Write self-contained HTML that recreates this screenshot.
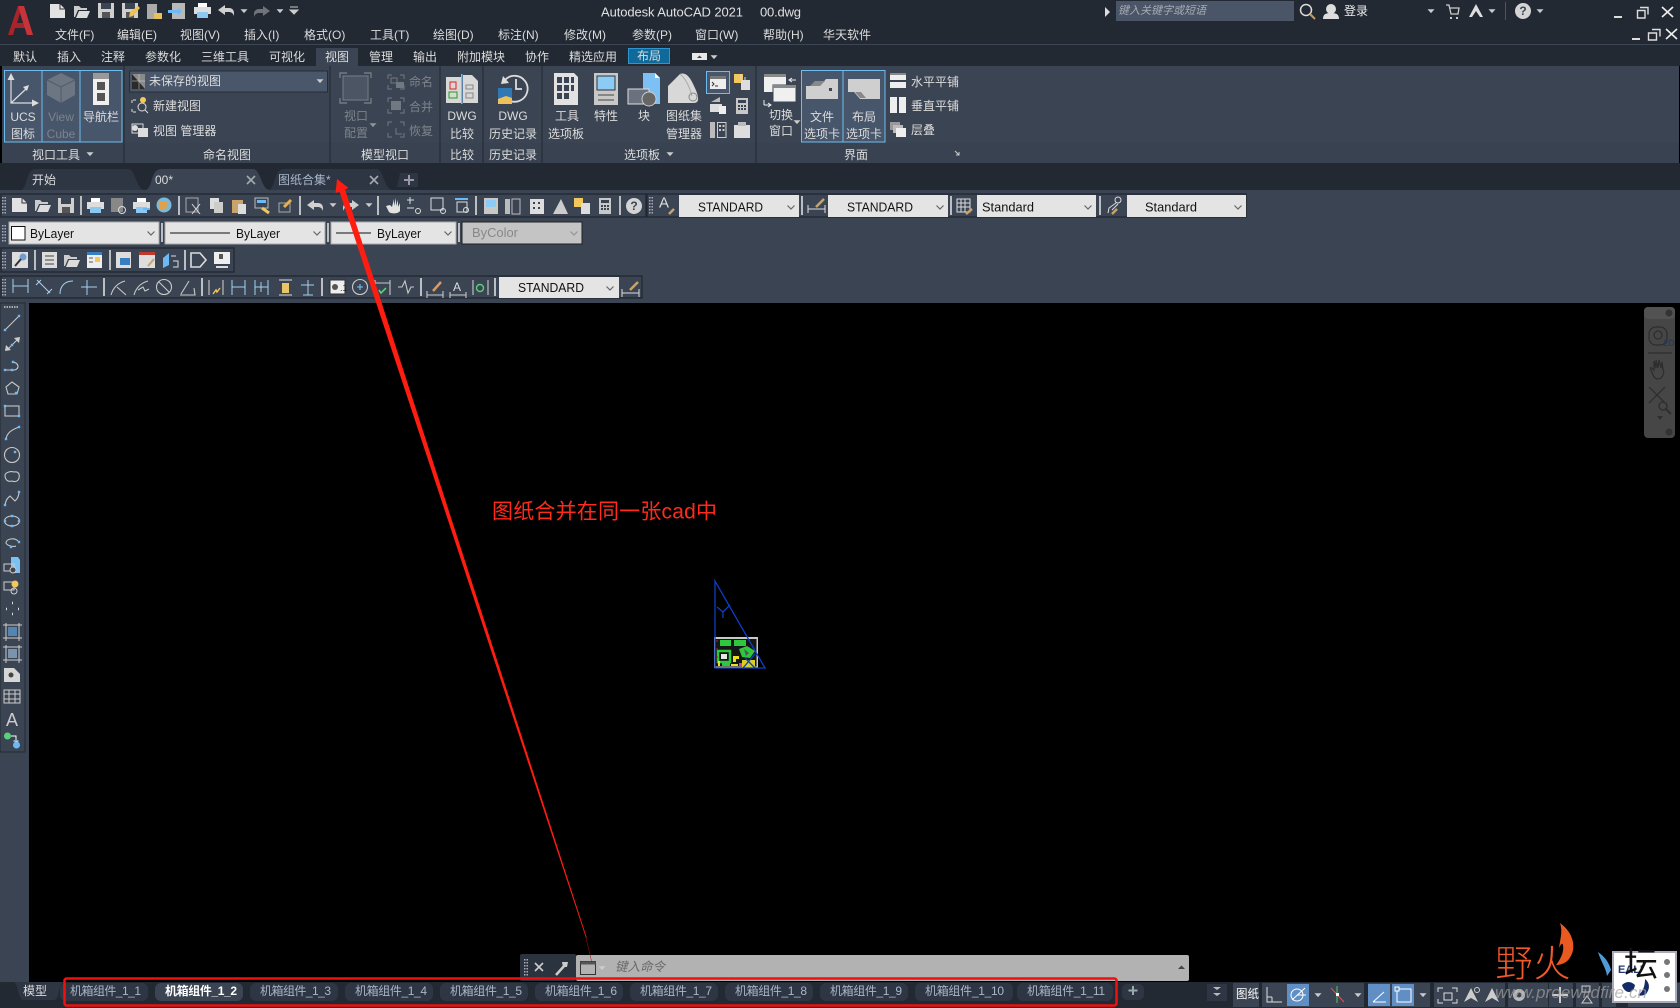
<!DOCTYPE html>
<html><head><meta charset="utf-8"><title>AutoCAD</title>
<style>
html,body{margin:0;padding:0;background:#000;overflow:hidden}
svg{display:block;font-family:"Liberation Sans","Noto Sans CJK SC",sans-serif}
.t{fill:#dcdcdc;font-size:12px;dominant-baseline:central}
.d{fill:#7d838c;font-size:12px;dominant-baseline:central}
.b{fill:#111;font-size:12.5px;dominant-baseline:central}
.m{text-anchor:middle}
.l{stroke:#c8c8c8;fill:none;stroke-width:1.1}
.u{stroke:#a6d2f0;fill:none;stroke-width:1}
.s{stroke:#e8e8e8;stroke-width:1.5}
.p{fill:none;stroke:#20262f;stroke-width:1.2}
.st{fill:#a8b6c9;font-size:12px;dominant-baseline:central}
.ft{fill:#2e3644}
</style></head><body>
<svg width="1680" height="1008" viewBox="0 0 1680 1008" xmlns="http://www.w3.org/2000/svg">
<defs>
<path id="c" d="M-3.5-1.7h7l-3.5 3.800z" fill="#ccc"/>
<path id="ch" d="M-3.5-1.5l3.500 3.500 3.500-3.500" fill="none" stroke="#666" stroke-width="1.200"/>
<g id="new"><path d="M0 0h10l5 5v9H0z" fill="#e2e2e2"/><path d="M10 0v5h5" fill="none" stroke="#333"/></g>
<g id="open"><path d="M0 2h5l2 2h6v2H4L1 13H0z" fill="#ccc"/><path d="M5 7h11l-3 7H2z" fill="#dcdcdc"/></g>
<g id="save"><rect width="16" height="15" fill="#cfcfcf"/><rect x="3" width="10" height="6" fill="#3b4452"/><rect x="4" y="9" width="8" height="6" fill="#555"/></g>
<g id="print"><rect x="4" width="9" height="4" fill="#fff"/><rect y="4" width="17" height="7" fill="#ddd"/><rect x="3" y="9" width="11" height="6" fill="#8cc9f2"/></g>
<path id="undo" d="M0 5L7 0v3h4c3 0 5 2 5 5v3c-1-3-3-4-5-4H7v3z" fill="#d0d0d0"/>
<path id="redo" d="M16 5L9 0v3H5C2 3 0 5 0 8v3c1-3 3-4 5-4h4v3z" fill="#d0d0d0"/>
<g id="calc"><rect width="12" height="16" fill="#c8c8c8"/><rect x="2" y="2" width="8" height="3" fill="#3b4452"/><path d="M2 7h2v2H2zM5 7h2v2H5zM8 7h2v2H8zM2 10h2v2H2zM5 10h2v2H5zM8 10h2v2H8z" fill="#3b4452"/></g>
<g id="grip"><path d="M0 0h1.500v1.500H0zM0 3h1.500v1.500H0zM0 6h1.500v1.500H0zM0 9h1.500v1.500H0zM0 12h1.500v1.500H0zM0 15h1.500v1.500H0zM2.500 0h1.500v1.500H2.500zM2.500 3h1.500v1.500H2.500zM2.500 6h1.500v1.500H2.500zM2.500 9h1.500v1.500H2.500zM2.500 12h1.500v1.500H2.500zM2.500 15h1.500v1.500H2.500z" fill="#aab"/></g>
<g id="dot"><rect x="-1.200" y="-1.200" width="2.400" height="2.400" fill="#6db9f5"/></g>
</defs>

<rect width="1680" height="1008" fill="#000"/>
<!-- top chrome -->
<rect width="1680" height="66" fill="#222933"/>
<rect y="44" width="1680" height="1" fill="#3d4654"/>
<path d="M8 35L18 6h6l9 29h-6l-2-7H15l-2 7z M17 23h6l-3-10z" fill="#a8242a" fill-rule="evenodd"/><path d="M18 6h6l9 29h-6z" fill="#c8333a"/>
<use href="#new" x="50" y="4"/><use href="#open" x="74" y="4"/><use href="#save" x="98" y="3"/><use href="#save" x="122" y="3"/><path d="M130 12l8-6 2 2-7 8-4 1z" fill="#f0c050"/>
<rect x="147" y="4" width="10" height="15" fill="#aaa"/><path d="M154 13h8v6h-8z" fill="#e7c25a"/>
<rect x="172" y="3" width="13" height="16" fill="#b8b8b8"/><path d="M168 10h10v-2l4 3.500-4 3.500v-2h-10z" fill="#6db9f5"/>
<use href="#print" x="194" y="3"/><use href="#undo" x="218" y="5"/><use href="#c" x="244" y="11"/><use href="#redo" x="254" y="6" opacity=".45"/><use href="#c" x="280" y="11"/><path d="M290 7h8M290 10h8l-4 4z" stroke="#ccc" fill="#ccc"/>
<text x="601" y="12" fill="#e0e0e0" font-size="13" dominant-baseline="central" textLength="142" lengthAdjust="spacing">Autodesk AutoCAD 2021</text>
<text x="760" y="12" fill="#e0e0e0" font-size="13" dominant-baseline="central" textLength="41" lengthAdjust="spacing">00.dwg</text>
<path d="M1105 7l5 5-5 5z" fill="#ddd"/>
<rect x="1116" y="1" width="178" height="20" fill="#4a5568"/>
<text x="1118" y="11" fill="#a6abb3" font-size="11" font-style="italic" dominant-baseline="central">键入关键字或短语</text>
<circle cx="1306" cy="10" r="5.500" fill="none" stroke="#ddd" stroke-width="1.500"/><path d="M1310 14l5 5" stroke="#c89a5a" stroke-width="2"/>
<circle cx="1331" cy="9" r="5" fill="#ddd"/><path d="M1323 19c0-5 3-6 8-6s8 1 8 6z" fill="#ddd"/>
<text x="1344" y="11" fill="#eee" font-size="12" dominant-baseline="central">登录</text>
<use href="#c" x="1431" y="11"/>
<path d="M1446 5h3l2 9h7l1-6h-9" fill="none" stroke="#ccc" stroke-width="1.300"/><path d="M1450 17h2v2h-2zM1456 17h2v2h-2z" fill="#ccc"/>
<path d="M1476 4l-7 13h3l4-6 4 6h3z" fill="#ddd"/><use href="#c" x="1492" y="11"/>
<rect x="1505" y="2" width="1" height="18" fill="#4a5464"/>
<circle cx="1523" cy="11" r="8" fill="#d4d4d4"/><text x="1523" y="11" class="m" fill="#3b4452" font-size="12" font-weight="bold" dominant-baseline="central">?</text><use href="#c" x="1540" y="11"/>
<rect x="1614" y="16" width="8" height="2" fill="#ddd"/><path d="M1640 7.500h8v7M1637.500 10.500h7.500v7.500h-7.500z" fill="none" stroke="#ddd" stroke-width="1.400"/><path d="M1662 7l11 10M1673 7l-11 10" stroke="#eee" stroke-width="1.600"/>
<rect x="1632" y="38" width="8" height="2" fill="#ddd"/><path d="M1652 29.500h8v7M1648.500 33h8v7h-8z" fill="none" stroke="#ddd" stroke-width="1.400"/><path d="M1666 29l11 10M1677 29l-11 10" stroke="#eee" stroke-width="1.600"/>

<!-- menu -->
<text class="t" x="55" y="35">文件(F)</text><text class="t" x="117" y="35">编辑(E)</text><text class="t" x="180" y="35">视图(V)</text><text class="t" x="244" y="35">插入(I)</text><text class="t" x="304" y="35">格式(O)</text><text class="t" x="370" y="35">工具(T)</text><text class="t" x="433" y="35">绘图(D)</text><text class="t" x="498" y="35">标注(N)</text><text class="t" x="564" y="35">修改(M)</text><text class="t" x="632" y="35">参数(P)</text><text class="t" x="695" y="35">窗口(W)</text><text class="t" x="763" y="35">帮助(H)</text><text class="t" x="823" y="35">华天软件</text>
<!-- ribbon tabs -->
<rect x="316" y="48" width="42" height="19" fill="#3b4452"/>
<text class="t" x="13" y="57">默认</text><text class="t" x="57" y="57">插入</text><text class="t" x="101" y="57">注释</text><text class="t" x="145" y="57">参数化</text><text class="t" x="201" y="57">三维工具</text><text class="t" x="269" y="57">可视化</text><text class="t" x="325" y="57">视图</text><text class="t" x="369" y="57">管理</text><text class="t" x="413" y="57">输出</text><text class="t" x="457" y="57">附加模块</text><text class="t" x="525" y="57">协作</text><text class="t" x="569" y="57">精选应用</text>
<rect x="628.500" y="48.500" width="41" height="15" fill="#0f6a9b" stroke="#2f95cf"/><text class="t" x="637" y="56" fill="#fff">布局</text>
<rect x="692" y="53" width="15" height="7" fill="#e8e8e8"/><path d="M697 58h5l-2.500-2.500z" fill="#444"/><use href="#c" x="714" y="57"/>

<!-- ribbon -->
<rect x="2" y="66" width="1677" height="97" fill="#3b4452"/>
<rect x="2" y="143" width="1677" height="20" fill="#394250"/>
<path d="M124 66v97M330 66v97M440 66v97M483 66v97M542 66v97M756 66v97" stroke="#2a313c" stroke-width="1.500"/>
<path d="M4.500 70.500h37.500v71.500H4.500zM42 70.500h38v71.500H42zM80 70.500h42v71.500H80z" fill="#47566b" stroke="#6dbcf0" stroke-width="1"/>
<path d="M11 75v28h26M11 103l16-15" fill="none" stroke="#ddd" stroke-width="1.200"/><path d="M11 73l-3.500 7h7zM39 103l-7-3.500v7zM29 85l-6 2 4 4z" fill="#ddd"/>
<path d="M61 73l14 7v15l-14 8-14-8V80z" fill="#6c7582"/><path d="M47 80l14 7 14-7M61 87v16" stroke="#525b68" fill="none"/>
<rect x="93" y="73" width="16" height="32" fill="#f0f0f0"/><rect x="93" y="73" width="16" height="6" fill="#999"/><rect x="97" y="82" width="8" height="8" fill="#555"/><rect x="97" y="93" width="8" height="8" fill="#555"/>
<text class="t m" x="23" y="117">UCS</text><text class="t m" x="23" y="134">图标</text>
<text class="d m" x="61" y="117">View</text><text class="d m" x="61" y="134">Cube</text>
<text class="t m" x="101" y="117">导航栏</text>
<text class="t" x="32" y="155">视口工具</text><use href="#c" x="90" y="154"/>

<rect x="129.500" y="71" width="198" height="21" fill="#4a5669" stroke="#262d38"/>
<path d="M132 74h13v15h-13z" fill="#8a8a8a"/><path d="M132 89V74l13 15z" fill="#2a2a2a"/><path d="M139 74v15M132 81h13" stroke="#ddd" opacity=".5"/>
<text class="t" x="149" y="81" fill="#eee">未保存的视图</text><use href="#c" x="320" y="81"/>
<path d="M132 100v3M133 100h3M133 112h3M132 109v3" stroke="#ddd" fill="none"/><circle cx="142" cy="107" r="4" fill="none" stroke="#ddd"/><path d="M145 110l3 3" stroke="#ddd"/><circle cx="143" cy="100" r="3" fill="#f3c958"/>
<text class="t" x="153" y="106">新建视图</text>
<rect x="132" y="124" width="11" height="9" fill="none" stroke="#ddd"/><rect x="138" y="128" width="10" height="9" fill="#ddd"/><circle cx="135" cy="128" r="3" fill="#ddd"/>
<text class="t" x="153" y="131">视图 管理器</text>
<text class="t" x="203" y="155">命名视图</text>

<g fill="none" stroke="#7d838c" stroke-width="1.200"><path d="M340 78v-5h7M364 73h7v5M371 98v5h-7M347 103h-7v-5"/><rect x="343" y="76" width="25" height="24" fill="#4c5563" stroke="#6f7681"/></g>
<text class="d" x="344" y="116">视口</text><text class="d" x="344" y="133">配置</text><use href="#c" x="373" y="125" opacity=".6"/>
<g fill="none" stroke="#727882"><path d="M388 79v-4h4M400 75h4v4M404 85v4h-4M392 89h-4v-4M388 102v-4h4M400 98h4v4M404 109v4h-4M392 113h-4v-4M388 126v-4h4M400 122h4v4M404 133v4h-4M392 137h-4v-4"/></g>
<rect x="391" y="78" width="6" height="5" fill="none" stroke="#727882"/><rect x="396" y="82" width="8" height="6" fill="#727882"/><rect x="391" y="101" width="10" height="9" fill="#727882"/><path d="M396 128v6h6" fill="none" stroke="#727882"/>
<text class="d" x="409" y="82">命名</text><text class="d" x="409" y="107">合并</text><text class="d" x="409" y="131">恢复</text>
<text class="t" x="361" y="155">模型视口</text>

<rect x="446" y="77" width="15" height="26" fill="#d8d8d8"/><path d="M463 75h9l6 6v22h-15z" fill="#d8d8d8"/><rect x="461" y="74" width="1.500" height="30" fill="#74c0f5"/>
<rect x="450" y="82" width="6" height="7" fill="none" stroke="#e02020"/><rect x="449" y="92" width="8" height="6" fill="none" stroke="#1ca01c"/><rect x="466" y="85" width="7" height="4" fill="none" stroke="#888"/><rect x="466" y="93" width="7" height="5" fill="none" stroke="#888"/>
<text class="t m" x="462" y="116">DWG</text><text class="t m" x="462" y="134">比较</text><text class="t m" x="462" y="155">比较</text>
<path d="M505 80a13 13 0 1 1-3 12" fill="none" stroke="#ddd" stroke-width="1.800"/><path d="M503 76l-2 8 8-1z" fill="#ddd"/><path d="M516 79v10h6" fill="none" stroke="#ddd" stroke-width="1.800"/>
<rect x="498" y="88" width="14" height="16" fill="#2f78b4"/><path d="M498 104v-5l8-3 6 2v6z" fill="#eec05a"/>
<text class="t m" x="513" y="116">DWG</text><text class="t m" x="513" y="134">历史记录</text><text class="t m" x="513" y="155">历史记录</text>

<path d="M554 73h20l4 4v28h-24z" fill="#e2e2e2"/><path d="M557 77h5v6h-5zM564 77h5v6h-5zM571 77h3v6h-3zM557 85h5v6h-5zM564 85h5v6h-5zM571 85h3v6h-3zM557 93h5v6h-5zM564 93h5v6h-5z" fill="#3b4452"/>
<text class="t" x="555" y="116">工具</text><text class="t" x="548" y="134">选项板</text>
<rect x="594" y="73" width="24" height="32" fill="#c8c8c8"/><rect x="597" y="76" width="18" height="14" fill="#8ccbf5" stroke="#333"/><path d="M598 95h16M598 100h16" stroke="#444"/>
<text class="t" x="594" y="116">特性</text>
<path d="M643 73h12l5 5v26h-17z" fill="#7dc0f3"/><path d="M655 73l5 5h-5z" fill="#fff"/><rect x="628" y="89" width="21" height="15" fill="#6a7280" stroke="#ddd"/><circle cx="649" cy="99" r="7" fill="#666" stroke="#ccc"/>
<text class="t" x="638" y="116">块</text>
<path d="M668 86l12-12c6-2 10 3 14 12 5 10 6 17 0 17h-26z" fill="#d8d8d8"/><path d="M680 74c5 4 9 11 12 22" fill="none" stroke="#aaa"/><circle cx="693" cy="97" r="4" fill="none" stroke="#888"/>
<text class="t" x="666" y="116">图纸集</text><text class="t" x="666" y="134">管理器</text>
<rect x="706.500" y="71.500" width="23" height="22" fill="#47566b" stroke="#6dbcf0"/><rect x="710" y="76" width="16" height="13" fill="#eee"/><rect x="710" y="76" width="16" height="3" fill="#777"/><path d="M712 82l2 2-2 2M715 86h3" stroke="#333" fill="none"/>
<rect x="734" y="74" width="9" height="9" fill="#f2c75c"/><path d="M741 80h9v10h-9z" fill="#ddd"/><path d="M741 74v6M745 77v3" stroke="#ddd"/>
<rect x="710" y="104" width="12" height="8" fill="#ddd"/><path d="M711 102l9-5v5z" fill="#bbb"/><rect x="719" y="106" width="7" height="8" fill="#eee"/><use href="#calc" x="736" y="98"/>
<rect x="710" y="122" width="5" height="16" fill="#bbb"/><rect x="717.500" y="122.500" width="8.500" height="15" fill="none" stroke="#ccc"/><path d="M719 125h2v2h-2zM722.500 125h2v2h-2zM719 129h2v2h-2zM722.500 129h2v2h-2z" fill="#ccc"/><rect x="734" y="125" width="16" height="13" fill="#ddd"/><rect x="738" y="122" width="8" height="4" fill="#bbb"/>
<text class="t" x="624" y="155">选项板</text><use href="#c" x="670" y="154"/>

<rect x="764" y="74" width="22" height="18" fill="#f0f0f0"/><rect x="764" y="74" width="22" height="3" fill="#888"/><rect x="773" y="85" width="23" height="17" fill="#f0f0f0" stroke="#3b4452"/><rect x="773" y="85" width="23" height="3" fill="#888"/><path d="M796 80h-6M792 78l-3 2 3 2M764 105h6M768 103l3 2-3 2M764 100v5" stroke="#eee" fill="none"/>
<text class="t" x="769" y="115">切换</text><text class="t" x="769" y="131">窗口</text><use href="#c" x="797" y="122"/>
<path d="M801.500 70.500h41.500v71.500h-41.500zM843 70.500h42v71.500h-42z" fill="#47566b" stroke="#6dbcf0"/>
<path d="M806 86h14l6-7h12v20h-32z" fill="#cfcfcf"/><path d="M810 86l5-5h10l-5 5z" fill="#888"/><rect x="829" y="88" width="3" height="3" fill="#444"/>
<path d="M848 79h32v20h-20l-6-7h-6z" fill="#cfcfcf"/><path d="M855 92h6l5 6h-6z" fill="#888"/>
<text class="t" x="810" y="117" fill="#eee">文件</text><text class="t" x="804" y="134" fill="#eee">选项卡</text><text class="t" x="852" y="117" fill="#eee">布局</text><text class="t" x="846" y="134" fill="#eee">选项卡</text>
<rect x="890" y="73" width="16" height="7" fill="#eee"/><rect x="890" y="73" width="16" height="2" fill="#888"/><rect x="890" y="82" width="16" height="6" fill="#eee"/>
<rect x="890" y="97" width="7" height="16" fill="#eee"/><rect x="899" y="97" width="7" height="16" fill="#eee"/>
<rect x="890" y="122" width="10" height="8" fill="#999"/><rect x="893" y="125" width="10" height="8" fill="#bbb"/><rect x="896" y="128" width="10" height="9" fill="#eee"/>
<text class="t" x="911" y="82">水平平铺</text><text class="t" x="911" y="106">垂直平铺</text><text class="t" x="911" y="130">层叠</text>
<text class="t" x="844" y="155">界面</text><path d="M955 151l4 4M959 152v3h-3" stroke="#ccc" fill="none"/>

<!-- file tabs -->
<rect y="163" width="1680" height="27" fill="#222933"/>
<path d="M20 190c8 0 5-21 16-21h92c8 0 8 21 17 21z" fill="#2e3644"/>
<path d="M268 190c8 0 5-21 16-21h92c8 0 8 21 17 21z" fill="#2e3644"/>
<path d="M145 190c8 0 5-21 16-21h92c8 0 8 21 17 21z" fill="#3b4452"/>
<path d="M397 187l3-14h18v14z" fill="#2e3644"/>
<text x="32" y="180" class="t" fill="#bbb">开始</text><text x="155" y="180" class="t">00*</text>
<path d="M247 176l8 8M255 176l-8 8M370 176l8 8M378 176l-8 8" stroke="#a4aab2" stroke-width="1.600"/>
<text x="278" y="180" class="st" fill="#a8b0bc">图纸合集*</text><path d="M409 175v10M404 180h10" stroke="#99a" stroke-width="2"/>

<!-- toolbar area -->
<rect y="190" width="1680" height="113" fill="#3b4452"/>
<path class="p" d="M1 194h645v23H1zM647 194h599v23H647zM1 248h233v24H1zM1 276h641v22H1z"/>
<use href="#grip" x="2" y="197"/><use href="#grip" x="2" y="225"/><use href="#grip" x="2" y="252"/><use href="#grip" x="2" y="279"/><use href="#grip" x="649" y="197"/>
<g class="s"><path d="M81 196v19M179 196v19M300 196v19M378 196v19M476 196v19M620 196v19M802 196v19M951 196v19M1100 196v19M162 223v19M328 223v19M459 223v19M35 250v20M110 250v20M185 250v20M104 278v18M202 278v18M322 278v18M421 278v18M495 278v18"/></g>
<use href="#new" x="12" y="198"/><use href="#open" x="35" y="198"/><use href="#save" x="58" y="198"/><use href="#print" x="87" y="198"/>
<rect x="111" y="198" width="12" height="14" fill="#888"/><circle cx="122" cy="210" r="3.500" fill="none" stroke="#ddd"/><use href="#print" x="133" y="198"/><path d="M143 209h7" stroke="#6db9f5" stroke-width="2"/>
<circle cx="164" cy="205" r="7.500" fill="#7ab9d8"/><path d="M158 201h10l-2 8h-6z" fill="#e2a04a"/>
<rect x="186" y="198" width="12" height="14" fill="none" stroke="#aaa"/><path d="M192 204l8 10M200 204l-8 10" stroke="#ddd"/>
<rect x="210" y="198" width="9" height="11" fill="#ddd"/><rect x="214" y="202" width="9" height="11" fill="#ccc"/>
<rect x="232" y="200" width="11" height="13" fill="#c9a36a"/><rect x="238" y="204" width="8" height="10" fill="#ddd"/>
<rect x="255" y="198" width="13" height="10" fill="none" stroke="#bbb"/><rect x="257" y="200" width="9" height="3" fill="#6db9f5"/><path d="M262 208l7 5" stroke="#f2c75c" stroke-width="3"/>
<rect x="279" y="203" width="11" height="9" fill="none" stroke="#aaa"/><path d="M284 207l7-7" stroke="#e9b04a" stroke-width="3"/>
<use href="#undo" x="307" y="200"/><use href="#c" x="333" y="205" fill="#fff"/><use href="#redo" x="343" y="200"/><use href="#c" x="369" y="205"/>
<path d="M386 206l3 6c2 2 9 2 11-1v-8l-2 4v-7l-2 6v-8l-2 8v-7l-2 8-2-2z" fill="#e2e2e2"/>
<path d="M407 200h7M410 197v7M407 208h7" stroke="#ddd"/><circle cx="418" cy="211" r="2.500" fill="none" stroke="#ddd"/>
<rect x="431" y="198" width="12" height="12" fill="none" stroke="#ddd"/><circle cx="443" cy="211" r="2.500" fill="none" stroke="#ddd"/>
<path d="M455 199h13" stroke="#6db9f5" stroke-width="2"/><rect x="457" y="202" width="10" height="10" fill="none" stroke="#ddd"/><circle cx="466" cy="210" r="2.500" fill="none" stroke="#ddd"/>
<rect x="484" y="198" width="14" height="16" fill="#c8c8c8"/><rect x="486" y="200" width="10" height="7" fill="#8ccbf5"/>
<rect x="505" y="199" width="5" height="15" fill="#bbb"/><rect x="512" y="199" width="8" height="15" fill="none" stroke="#bbb"/>
<rect x="530" y="199" width="14" height="15" fill="#ddd"/><path d="M533 202h2v2h-2zM538 202h2v2h-2zM533 207h2v2h-2zM538 207h2v2h-2z" fill="#3b4452"/>
<path d="M553 214l8-15 7 15z" fill="#ccc"/><rect x="574" y="198" width="9" height="9" fill="#f2c75c"/><rect x="581" y="203" width="9" height="11" fill="#ddd"/><use href="#calc" x="599" y="198"/>
<circle cx="634" cy="206" r="8" fill="#d4d4d4"/><text x="634" y="206" class="m" fill="#3b4452" font-size="12" font-weight="bold" dominant-baseline="central">?</text>
<text x="659" y="203" font-size="15" fill="#ddd" dominant-baseline="central">A</text><path d="M669 214l5-5" stroke="#c9a36a" stroke-width="2.500"/>
<rect x="679" y="195" width="120" height="22" fill="#e4e4e4"/><text class="b" x="698" y="207.500" textLength="65" lengthAdjust="spacingAndGlyphs">STANDARD</text><use href="#ch" x="791" y="207"/>
<path d="M808 205v8M825 205v8M808 209h17" stroke="#ddd"/><path d="M816 207l8-8" stroke="#c9a36a" stroke-width="2.500"/>
<rect x="828" y="195" width="120" height="22" fill="#e4e4e4"/><text class="b" x="847" y="207.500" textLength="66" lengthAdjust="spacingAndGlyphs">STANDARD</text><use href="#ch" x="940" y="207"/>
<g fill="none" stroke="#ddd"><rect x="957" y="199" width="13" height="13"/><path d="M957 203h13M957 207h13M961 199v13M965 199v13"/></g><path d="M966 214l6-5" stroke="#c9a36a" stroke-width="2.500"/>
<rect x="977" y="195" width="119" height="22" fill="#e4e4e4"/><text class="b" x="982" y="207.500" textLength="52" lengthAdjust="spacingAndGlyphs">Standard</text><use href="#ch" x="1088" y="207"/>
<circle cx="1118" cy="200" r="3" fill="none" stroke="#ddd"/><path d="M1116 203l-7 5-1 5M1118 204l-6 6" stroke="#ddd" fill="none"/><path d="M1112 214l5-5" stroke="#c9a36a" stroke-width="2.500"/>
<rect x="1127" y="195" width="119" height="22" fill="#e4e4e4"/><text class="b" x="1145" y="207.500" textLength="52" lengthAdjust="spacingAndGlyphs">Standard</text><use href="#ch" x="1238" y="207"/>

<rect x="9" y="222" width="150" height="22" fill="#e4e4e4" stroke="#aaa"/><rect x="11.500" y="226.500" width="13.500" height="13.500" fill="#fff" stroke="#111"/><text class="b" x="30" y="234" textLength="44" lengthAdjust="spacingAndGlyphs">ByLayer</text><use href="#ch" x="151" y="233"/>
<rect x="165" y="222" width="160" height="22" fill="#e4e4e4" stroke="#aaa"/><path d="M170 233h60" stroke="#111"/><text class="b" x="236" y="234" textLength="44" lengthAdjust="spacingAndGlyphs">ByLayer</text><use href="#ch" x="317" y="233"/>
<rect x="331" y="222" width="125" height="22" fill="#e4e4e4" stroke="#aaa"/><path d="M336 233h35" stroke="#111"/><text class="b" x="377" y="234" textLength="44" lengthAdjust="spacingAndGlyphs">ByLayer</text><use href="#ch" x="448" y="233"/>
<rect x="462" y="222" width="120" height="22" fill="#c4c4c4" stroke="#222"/><text x="472" y="233" fill="#888" font-size="12.500" dominant-baseline="central" textLength="46" lengthAdjust="spacingAndGlyphs">ByColor</text><use href="#ch" x="574" y="233" opacity=".5"/>

<rect x="12" y="252" width="16" height="16" fill="#ddd"/><circle cx="23" cy="257" r="3.500" fill="#6f9fd0"/><path d="M21 259l-6 7" stroke="#333" stroke-width="2"/>
<rect x="42" y="252" width="15" height="16" fill="#ddd"/><path d="M45 256h9M45 260h9M45 264h9" stroke="#444"/><use href="#open" x="64" y="253"/>
<rect x="87" y="252" width="15" height="16" fill="#eee"/><rect x="87" y="252" width="15" height="3" fill="#3a7ec2"/><rect x="95" y="257" width="5" height="5" fill="#f2c75c"/><path d="M89 258h4M89 262h4" stroke="#555"/>
<rect x="116" y="252" width="15" height="16" fill="#ddd"/><rect x="120" y="258" width="10" height="7" fill="#3a7ec2"/>
<rect x="139" y="252" width="16" height="16" fill="#ddd"/><rect x="139" y="252" width="16" height="3" fill="#c0392b"/><path d="M148 266l6-7" stroke="#c9a36a" stroke-width="2"/>
<path d="M163 258l6-5v12l-6 3z" fill="#6db9f5"/><path d="M171 256h5M173 261h5v6h-5" fill="none" stroke="#ddd"/>
<path d="M191 253h9l6 7-6 7h-9z" fill="none" stroke="#ddd" stroke-width="1.600"/><rect x="214" y="252" width="16" height="12" fill="#eee"/><rect x="219" y="254" width="4" height="5" fill="#555"/><path d="M216 267h12" stroke="#ddd" stroke-width="2"/>

<g class="u"><path d="M13 279v14M28 279v14M13 286h15"/><path d="M37 280l13 13M36 285l5-5M47 294l5-5"/><path d="M60 294c0-8 5-13 13-13"/><path d="M81 287h16M87 280v15"/></g>
<g class="l"><path d="M111 295c2-7 7-12 14-14M117 287l9 8"/><path d="M134 295c2-7 7-12 14-14M138 290l5-3 2 4 4-2"/><circle cx="164" cy="287" r="7.500"/><path d="M159 282l10 10"/><path d="M180 295h15l-1-7M181 294l8-13"/></g>
<path d="M209 280v15M223 280v15" class="l"/><path d="M213 294l3-4 1 2 3-4" stroke="#f2c75c" fill="none" stroke-width="1.400"/>
<path d="M232 280v15M245 280v15M232 287h13" class="u"/><path d="M255 280v15M268 280v15M255 287h13M261 282v10" class="u"/>
<path d="M279 280h13M279 295h13" stroke="#ddd"/><rect x="282" y="283" width="7" height="10" fill="#e8c569"/>
<path d="M301 285h13M308 280v15M303 295h10" class="u"/>
<rect x="330" y="280" width="15" height="14" fill="#eee" stroke="#333"/><circle cx="335" cy="287" r="3" fill="#555"/><text x="340" y="288" font-size="9" fill="#222" dominant-baseline="central">.1</text>
<circle cx="360" cy="287" r="7.500" class="l"/><path d="M360 284v6M357 287h6" stroke="#7cc3f5"/>
<path d="M375 280v15M390 280v15M375 283h15" class="l"/><path d="M379 290l2 3 5-5" stroke="#5bd07a" fill="none" stroke-width="1.600"/>
<path d="M398 287h4l3-6 3 12 3-6h3" class="l"/>
<path d="M427 295h16M427 291v7M443 291v7" class="l"/><path d="M433 291l8-9" stroke="#d89a60" stroke-width="2.500"/>
<text x="457" y="287" font-size="12" fill="#ddd" text-anchor="middle" dominant-baseline="central">A</text><path d="M450 295h16M450 292v6M466 292v6" class="l"/>
<path d="M473 280v15M488 280v15" class="l"/><circle cx="480" cy="288" r="3.500" fill="none" stroke="#5bd07a" stroke-width="1.400"/>
<rect x="499" y="277" width="120" height="21" fill="#e4e4e4"/><text class="b" x="518" y="288" textLength="66" lengthAdjust="spacingAndGlyphs">STANDARD</text><use href="#ch" x="610" y="288"/>
<path d="M622 289v8M639 289v8M622 293h17" stroke="#ddd"/><path d="M630 290l8-8" stroke="#c9a36a" stroke-width="2.500"/>

<!-- left toolbar -->
<rect y="303" width="29" height="680" fill="#3b4452"/>
<rect x="0" y="303" width="25" height="449" fill="none" stroke="#232a34"/>
<path d="M4 307h14" stroke="#aaa" stroke-dasharray="1.500 1" stroke-width="2"/>
<g class="l">
<path d="M5 330l14-14"/>
<path d="M7 350l12-12"/>
<path d="M5 370h7c8 1 8-8 0-8"/>
<path d="M12 382l7 5-2 7H8l-2-7z"/>
<rect x="5" y="406" width="14" height="10"/>
<path d="M6 439c1-6 5-9 13-12"/>
<circle cx="12" cy="455" r="7.500"/>
<path d="M5 475c1-3 6-4 9-3 4-1 6 2 5 6-1 4-5 4-7 3-3 1-7 0-7-6z"/>
<path d="M5 505c1-6 3-7 5-9l5 5c2-2 3-3 4-8"/>
<ellipse cx="12" cy="521" rx="7.500" ry="5"/>
<path d="M16 546c-2 1-9 0-10-3 0-4 8-6 12-2"/>
</g>
<use href="#dot" x="5" y="330"/><use href="#dot" x="19" y="316"/><use href="#dot" x="12" y="345"/><use href="#dot" x="5" y="370"/><use href="#dot" x="12" y="370"/><use href="#dot" x="13" y="362"/><use href="#dot" x="16" y="393"/><use href="#dot" x="5" y="406"/><use href="#dot" x="19" y="416"/><use href="#dot" x="6" y="439"/><use href="#dot" x="19" y="427"/><use href="#dot" x="15" y="452"/><use href="#dot" x="5" y="505"/><use href="#dot" x="19" y="492"/><use href="#dot" x="12" y="516"/><use href="#dot" x="12" y="526"/><use href="#dot" x="19" y="521"/><use href="#dot" x="5" y="521"/><use href="#dot" x="11" y="547"/><use href="#dot" x="19" y="542"/>
<path d="M5 351l1-6 5 5zM20 337l-6 1 5 5z" fill="#ccc"/>
<path d="M11 557h7l2 3v13h-9z" fill="#7dc0f3"/><rect x="4" y="564" width="10" height="7" fill="none" stroke="#ccc"/><circle cx="13" cy="570" r="3" fill="#444" stroke="#ccc"/>
<rect x="4" y="582" width="10" height="8" fill="none" stroke="#ccc"/><circle cx="15" cy="584" r="3.500" fill="#f2c75c"/><circle cx="14" cy="591" r="3" fill="none" stroke="#ccc"/>
<path d="M12 603h1M6 609h1M18 609h1M12 614h1" stroke="#ddd" stroke-width="2.500"/>
<rect x="8" y="627" width="9" height="9" fill="#5d99d2" opacity=".75"/><g fill="none" stroke="#ccc"><rect x="6" y="625" width="13" height="13"/><path d="M3 625h19M3 638h19M6 623v18M19 623v18"/></g>
<rect x="8" y="649" width="9" height="9" fill="#8ba7c6" opacity=".8"/><g fill="none" stroke="#ccc"><path d="M3 647h19M3 660h19M6 645v18M19 645v18"/></g>
<path d="M4 668h10l6 6v8H4z" fill="#d6d6d6"/><circle cx="11" cy="675" r="2.500" fill="#444"/>
<g fill="none" stroke="#ccc"><rect x="4" y="690" width="16" height="13"/><path d="M4 694h16M4 699h16M9 690v13M15 690v13"/></g>
<text x="12" y="720" font-size="18" fill="#ccc" text-anchor="middle" dominant-baseline="central">A</text>
<circle cx="7.500" cy="736" r="3.500" fill="#5bd07a"/><circle cx="16.500" cy="745" r="3.500" fill="#6db9f5"/><path d="M11 736h5v4M13.500 741h5" stroke="#fff" fill="none"/>

<!-- nav bar -->
<rect x="1644" y="307" width="31" height="131" rx="4" fill="#464646"/>
<rect x="1644" y="307" width="31" height="12" rx="4" fill="#525252"/>
<g fill="none" stroke="#2e2e2e" stroke-width="1.300"><rect x="1649" y="327" width="18" height="18" rx="7"/><circle cx="1658" cy="335" r="4"/><path d="M1648 353h24"/><path d="M1651 370c-2-4 1-2 3 0l0-9 2 7v-8l2 8 1-8 2 8 1-6 1 8c2 3-1 9-5 9-4 0-5-4-7-9z"/><path d="M1649 387l16 16M1665 387l-16 16"/><circle cx="1663" cy="406" r="4"/><path d="M1666 409l5 5" stroke-width="2"/></g>
<text x="1669" y="346" font-size="9" font-weight="bold" fill="#2c3a55" text-anchor="middle">2D</text>
<path d="M1657 416h6l-3 4z" fill="#2e2e2e"/><circle cx="1669" cy="313" r="3.500" fill="#333"/><circle cx="1669" cy="432" r="3.500" fill="#333"/>

<!-- drawing -->
<rect x="714" y="637" width="44" height="31" fill="#c8c8c8"/><rect x="715.500" y="639" width="41" height="27.500" fill="#151515"/>
<rect x="720" y="640" width="11" height="6" fill="#2ec83f"/><rect x="734" y="640" width="12" height="6" fill="#2ec83f"/><path d="M718 651h12v11h-12z" fill="none" stroke="#2ec83f" stroke-width="2.500"/><rect x="721" y="654" width="6" height="5" fill="#e8e8e8"/>
<path d="M739 649l8-3 8 5-5 7-8-1z" fill="#2ec83f"/><path d="M744 649l5 4-3 3z" fill="#555"/><path d="M733 656h6v3h-3v3h-3z" fill="#e8e020"/><path d="M742 660h13v7h-13z" fill="#d8d020"/><rect x="718" y="661" width="2" height="5" fill="#e8e020"/><rect x="722" y="662" width="8" height="4" fill="#2ec83f"/><rect x="731" y="664" width="7" height="2" fill="#e8e020"/><rect x="739" y="663" width="3" height="3" fill="#e62ec8"/><path d="M717 640v24" stroke="#c02020" stroke-dasharray="2 6"/>
<path d="M715 581v87h50zM717 607l6 5 7-7M723 612v6M743 668l12-14M755 668l-10-10" fill="none" stroke="#0d3fc4" stroke-width="1.300"/>

<!-- annotation -->
<text x="492" y="512" font-size="21" fill="#ff2a1a" dominant-baseline="central" textLength="225" lengthAdjust="spacing">图纸合并在同一张cad中</text>

<!-- command line -->
<rect x="520" y="954" width="56" height="27" rx="2" fill="#2b333f"/>
<rect x="576" y="955" width="613" height="26" rx="2" fill="#b2b2b2"/>
<use href="#grip" x="524" y="959"/>
<path d="M535 963l8 8M543 963l-8 8" stroke="#ccc" stroke-width="1.600"/><path d="M556 975l9-10" stroke="#ccc" stroke-width="2.500"/><path d="M562 962l6 0-1 5-4 0z" fill="#ccc"/>
<rect x="580.500" y="961.500" width="15" height="13" fill="none" stroke="#333"/><rect x="580.500" y="961.500" width="15" height="3" fill="#555"/><use href="#c" x="602" y="968" fill="#333"/>
<text x="615" y="967" font-size="12.500" font-style="italic" fill="#6a6a6a" dominant-baseline="central">键入命令</text>
<path d="M1178 969h7l-3.500-3.500z" fill="#444"/>

<!-- status bar -->
<rect y="982" width="1680" height="26" fill="#222933"/>
<path d="M13 982c6 0 4 18 11 18h30c6 0 4-18 10-18z" fill="#2e3644"/>
<g class="ft">
<rect x="60" y="983" width="88" height="18" rx="6"/><rect x="250" y="983" width="88" height="18" rx="6"/><rect x="345" y="983" width="88" height="18" rx="6"/><rect x="440" y="983" width="88" height="18" rx="6"/><rect x="535" y="983" width="88" height="18" rx="6"/><rect x="630" y="983" width="88" height="18" rx="6"/><rect x="725" y="983" width="88" height="18" rx="6"/><rect x="820" y="983" width="88" height="18" rx="6"/><rect x="915" y="983" width="98" height="18" rx="6"/><rect x="1017" y="983" width="96" height="18" rx="6"/><rect x="1122" y="984" width="22" height="16" rx="5"/>
</g>
<rect x="155" y="983" width="88" height="18" rx="6" fill="#3b4452"/>
<text class="t" x="23" y="991" fill="#ddd">模型</text>
<text class="st" x="70" y="991" textLength="71">机箱组件_1_1</text>
<text x="165" y="991" font-size="12" font-weight="bold" fill="#fff" dominant-baseline="central" textLength="72">机箱组件_1_2</text>
<text class="st" x="260" y="991" textLength="71">机箱组件_1_3</text><text class="st" x="355" y="991" textLength="72">机箱组件_1_4</text><text class="st" x="450" y="991" textLength="72">机箱组件_1_5</text><text class="st" x="545" y="991" textLength="72">机箱组件_1_6</text><text class="st" x="640" y="991" textLength="72">机箱组件_1_7</text><text class="st" x="735" y="991" textLength="72">机箱组件_1_8</text><text class="st" x="830" y="991" textLength="72">机箱组件_1_9</text><text class="st" x="925" y="991" textLength="79">机箱组件_1_10</text><text class="st" x="1027" y="991" textLength="78">机箱组件_1_11</text>
<path d="M1133 986v9M1128.500 990.500h9" stroke="#9aa" stroke-width="2"/>
<rect x="64.500" y="978.500" width="1052" height="27" rx="2" fill="none" stroke="#f01010" stroke-width="2.500"/>

<rect x="1207" y="984" width="20" height="17" fill="#2e3644"/><path d="M1213 987h8l-4 3zM1213 993h8l-4 3z" fill="#bbb"/>
<rect x="1233" y="983" width="26" height="24" fill="#3b4452"/><text x="1236" y="994" font-size="12" fill="#fff" dominant-baseline="central" textLength="23" lengthAdjust="spacingAndGlyphs">图纸</text>
<rect x="1262" y="983" width="102" height="24" fill="#3b4452"/><rect x="1368" y="983" width="62" height="24" fill="#3b4452"/><rect x="1434" y="983" width="71" height="24" fill="#3b4452"/><rect x="1508" y="983" width="40" height="24" fill="#3b4452"/><rect x="1549" y="983" width="24" height="24" fill="#3b4452"/><rect x="1576" y="983" width="23" height="24" fill="#3b4452"/><rect x="1602" y="983" width="14" height="24" fill="#3b4452"/><rect x="1628" y="983" width="52" height="24" fill="#3b4452"/>
<path d="M1267 987v15h15M1272 997v5M1267 997h5" fill="none" stroke="#ddd"/>
<rect x="1287" y="984" width="22" height="22" fill="#5f8fc4"/><circle cx="1297" cy="995" r="6" fill="none" stroke="#fff"/><path d="M1292 1000l13-12M1297 995h9" stroke="#fff"/>
<use href="#c" x="1318" y="995"/><path d="M1331 988l13 14" stroke="#e25555"/><path d="M1337 986v17" stroke="#55c56a"/><rect x="1336" y="993" width="3" height="3" fill="#fff"/><use href="#c" x="1358" y="995"/>
<rect x="1368" y="984" width="22" height="22" fill="#5f8fc4"/><path d="M1373 1002h13M1373 1002l11-10" stroke="#fff"/>
<rect x="1392" y="984" width="22" height="22" fill="#5f8fc4"/><path d="M1397 989h14v13h-14z" fill="none" stroke="#fff"/><rect x="1395" y="987" width="4" height="4" fill="#5f8fc4" stroke="#fff"/><use href="#c" x="1423" y="995"/>
<g fill="none" stroke="#ddd"><path d="M1438 992v-4h5M1452 988h5v4M1457 999v4h-5M1443 1003h-5v-4"/><rect x="1444" y="993" width="8" height="7"/></g>
<path d="M1471 988l-7 14 7-4 7 4z" fill="#ccc"/><circle cx="1477" cy="990" r="2.500" fill="none" stroke="#ccc"/><path d="M1492 988l-7 14 7-4 7 4z" fill="#ccc"/>
<circle cx="1519" cy="995" r="6" fill="#bbb"/><circle cx="1519" cy="995" r="2.500" fill="#3b4452"/><path d="M1560 987v16M1552 995h16" stroke="#ccc" stroke-width="2"/><path d="M1582 1003l5-7 5 7z" fill="none" stroke="#ccc"/><rect x="1582" y="986" width="8" height="6" fill="none" stroke="#ccc"/>

<!-- watermark -->
<rect x="1613" y="952" width="63" height="50" fill="#fff" stroke="#aab" stroke-width="2"/>
<path d="M1598 952c6 4 11 10 13 18l-4 6c-1-8-6-14-9-24z" fill="#4d9bd8"/>
<text x="1618" y="970" font-size="11" font-weight="bold" fill="#23386e" dominant-baseline="central">EAL'</text>
<path d="M1622 985c4-4 9-4 13 0-1 5-3 7-6 7s-6-3-7-7zM1645 979c4 3 6 9 1 15-3 2-6 2-8 1 5-3 7-9 7-16z" fill="#152b66"/>
<text x="1641" y="965" font-size="34" fill="#111" text-anchor="middle" dominant-baseline="central">坛</text>
<circle cx="1667" cy="962" r="3" fill="#777"/><circle cx="1667" cy="975" r="3" fill="#777"/><circle cx="1667" cy="989" r="3" fill="#777"/>
<text x="1495" y="965" font-size="38" fill="#f2592a" stroke="#000" stroke-width="1" dominant-baseline="central">野</text>
<text x="1533" y="965" font-size="38" fill="#f2592a" stroke="#000" stroke-width="1" dominant-baseline="central">火</text>
<path d="M1560 923c14 10 17 26 9 36-3 4-8 6-13 6 6-8 8-14 7-20-1-3-3 1-4 3 1-9 4-16 1-25z" fill="#e85a20"/>
<text x="1495" y="998" font-size="17" font-style="italic" fill="#a0a0a0" opacity=".7" textLength="152" lengthAdjust="spacing">www.proewildfire.cn</text>

<!-- arrow -->
<path d="M337 179l-1.500 14 4-1.200L586 938l.8-.2L345 189.500l3.500-1.500z" fill="#ff1c10"/>
<path d="M586 938l6 25" stroke="#a81008" stroke-width=".5"/>
</svg>
</body></html>
